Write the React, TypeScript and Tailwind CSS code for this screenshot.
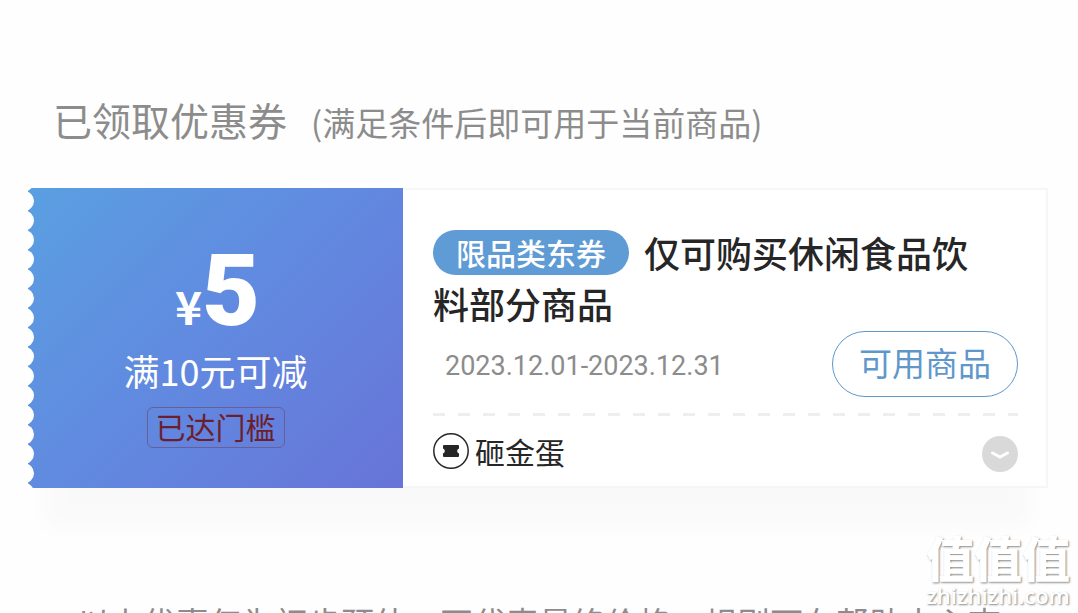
import { ReactNode } from 'react';

const coupon = {
    symbol: '¥',
    amount: '5',
    condition: '满10元可减',
    status: '已达门槛',
    tag: '限品类东券',
    title: '仅可购买休闲食品饮料部分商品',
    period: '2023.12.01-2023.12.31',
    source: '砸金蛋',
};

const NOTCH_STEP = 19.45;

function TicketEdge() {
    const notches = Array.from({ length: 17 }, (_, i) => 13 + (i - 1) * NOTCH_STEP);
    return (
        <svg className="absolute left-0 top-0 h-full w-2 text-white" aria-hidden="true">
            {notches.map((cy) => (
                <circle key={cy} cx="-4" cy={cy} r="10" fill="currentColor" />
            ))}
        </svg>
    );
}

function TicketIcon() {
    return (
        <svg viewBox="0 0 36 36" className="size-9 shrink-0" aria-hidden="true">
            <circle cx="18" cy="18" r="17.2" fill="none" stroke="#262626" strokeWidth="1.5" />
            <path
                d="M11 12H25a1 1 0 0 1 1 1v2.5c-1.2.4-1.8 1.3-1.8 2.5s.6 2.1 1.8 2.5V23a1 1 0 0 1-1 1H11a1 1 0 0 1-1-1v-2.500c1.200-.4 1.800-1.300 1.800-2.500s-.6-2.100-1.800-2.500V13a1 1 0 0 1 1-1z"
                fill="#262626"
            />
        </svg>
    );
}

function Tag({ children }: { children: ReactNode }) {
    return (
        <span className="mt-[3px] mr-[15px] inline-flex h-[45px] items-center rounded-full bg-[#5f9bd5] px-[23px] pb-[2px] align-top text-[30px] leading-none text-white">
            {children}
        </span>
    );
}

function Coupon() {
    return (
        <article className="flex bg-white shadow-[0_56px_20px_-16px_rgba(0,0,0,0.02)]">
            {/* Amount */}
            <div className="relative flex w-[375px] shrink-0 flex-col items-center bg-linear-135 from-[#5a9fe1] via-[#6189e0] to-[#6774d8] pt-[55px] pb-10 text-white">
                <TicketEdge />
                <div className="flex items-baseline pl-1 leading-[96px] font-bold">
                    <span className="text-[46px]">{coupon.symbol}</span>
                    <span className="font-['Roboto',sans-serif] text-[100px] font-black">{coupon.amount}</span>
                </div>
                <p className="-mt-2 text-[36px] leading-[50px]">{coupon.condition}</p>
                <span className="mt-3 rounded-md border border-[#675f95] px-2 pb-[2px] text-[30px] leading-[37px] text-[#6b1f2e]">
                    {coupon.status}
                </span>
            </div>

            {/* Details */}
            <div className="flex min-w-0 flex-1 flex-col border-2 border-l-0 border-[#f6f6f6] pt-[37px] pr-7 pb-[14px] pl-[30px]">
                <h2 className="max-w-[550px] text-[36px] leading-[51px] font-medium text-[#262626]">
                    <Tag>{coupon.tag}</Tag>
                    {coupon.title}
                </h2>
                <div className="mt-[2px] flex items-center justify-between">
                    <time className="pt-1 pl-3 font-['Roboto',sans-serif] text-[27px] text-[#8c8c8c]">
                        {coupon.period}
                    </time>
                    <button
                        type="button"
                        className="h-[66px] rounded-full border border-[#5f97cb] px-[26px] pb-[3px] text-[33px] leading-none text-[#5f97cb]"
                    >
                        可用商品
                    </button>
                </div>
                <div className="mt-4 h-[3px] bg-[repeating-linear-gradient(90deg,#eeeeee_0_12px,transparent_12px_25px)]" />
                <div className="mt-[14px] flex items-center justify-between">
                    <div className="flex items-center gap-[6px]">
                        <TicketIcon />
                        <span className="text-[30px] leading-[42px] text-[#262626]">{coupon.source}</span>
                    </div>
                    <button type="button" aria-label="展开" className="mt-[6px] size-9 rounded-full bg-[#d9d9d9]">
                        <svg viewBox="0 0 36 36" fill="none" stroke="#fff" strokeWidth="3" strokeLinecap="round" strokeLinejoin="round">
                            <path d="M10.5 17l7.5 4 7.5-4" />
                        </svg>
                    </button>
                </div>
            </div>
        </article>
    );
}

function Watermark() {
    return (
        <div className="absolute right-2 bottom-1 flex flex-col items-center text-white [text-shadow:1px_1px_2px_#888888]">
            <span className="text-[48px] leading-[50px] font-black">值值值</span>
            <span className="font-['Open_Sans',sans-serif] text-[22px] leading-[28px] font-semibold">zhizhizhi.com</span>
        </div>
    );
}

export default function App() {
    return (
        <main
            lang="zh-CN"
            className="relative h-screen overflow-hidden bg-[#fefefe] pt-[91px] font-['Noto_Sans_CJK_SC',sans-serif]"
        >
            <header className="flex items-baseline gap-6 pl-[53px] leading-[56px] text-[#8c8c8c]">
                <h1 className="text-[39px]">已领取优惠券</h1>
                <p className="text-[33px]">(满足条件后即可用于当前商品)</p>
            </header>

            <section className="mt-[38px] pr-[30px] pl-7">
                <Coupon />
            </section>

            <p className="mt-[116px] text-center text-[33px] leading-[36px] whitespace-nowrap text-[#8c8c8c]">
                以上优惠仅为初步预估，不代表最终价格，规则可在帮助中心查
            </p>

            <Watermark />
        </main>
    );
}
